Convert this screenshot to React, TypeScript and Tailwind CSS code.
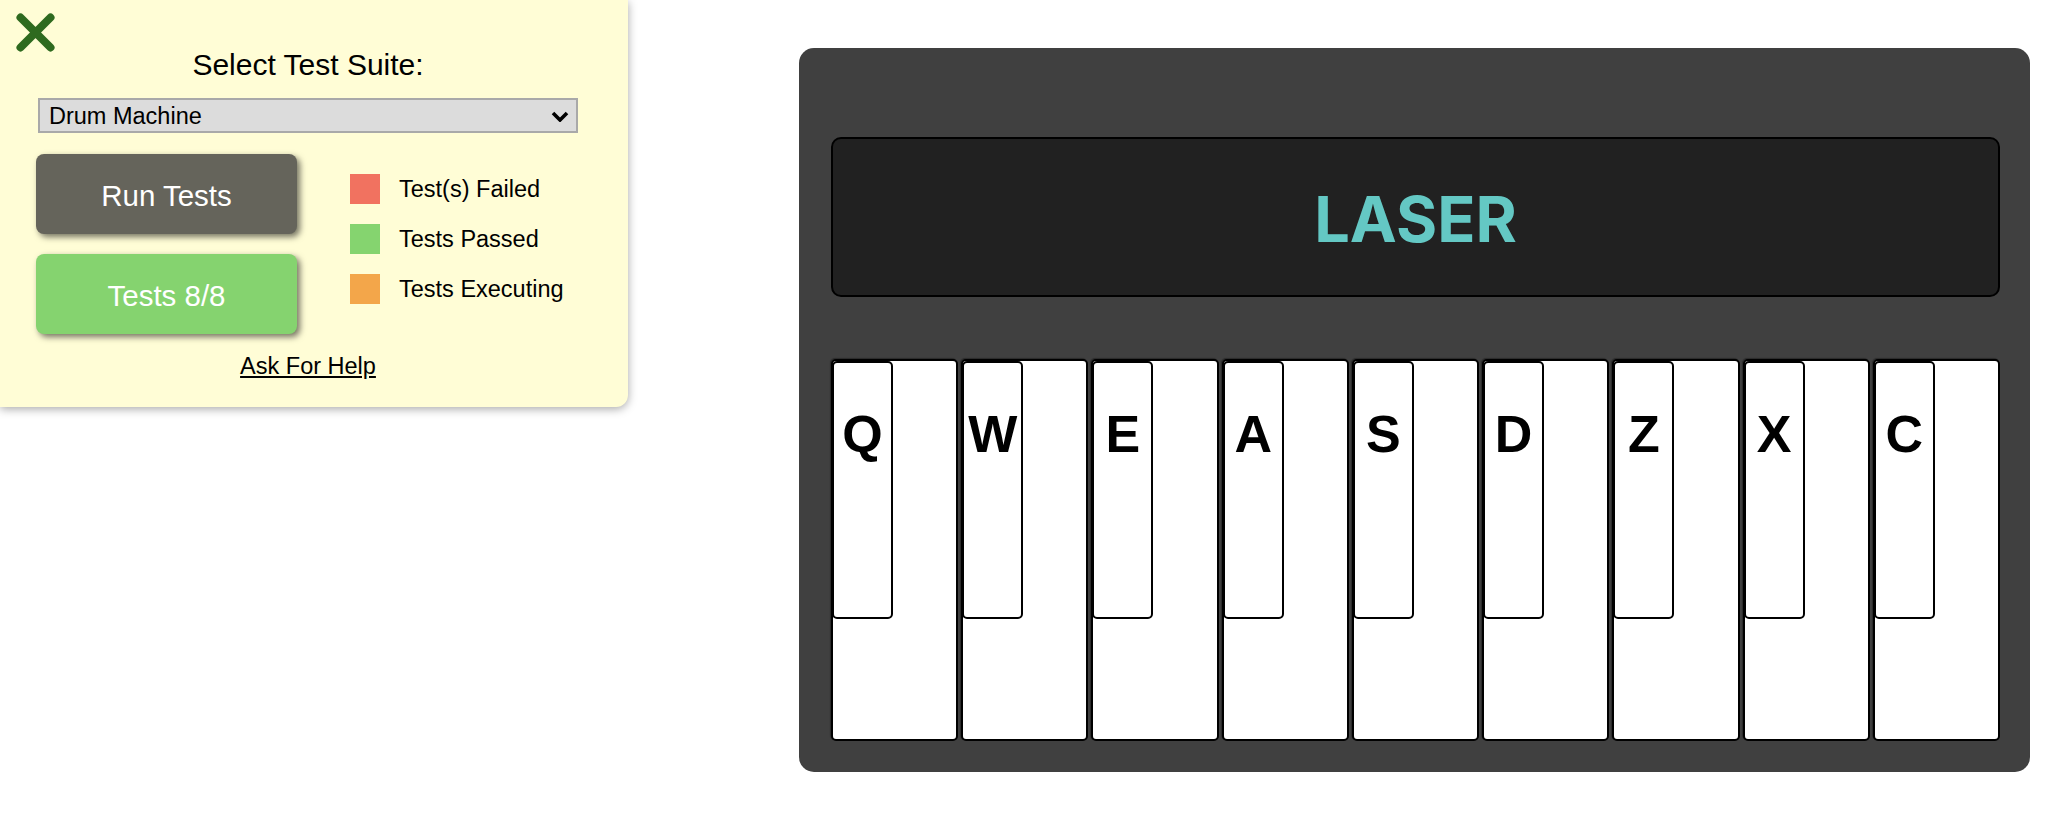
import { useState } from "react";

const KEYS = ["Q", "W", "E", "A", "S", "D", "Z", "X", "C"];

const LEGEND = [
    { label: "Test(s) Failed", color: "bg-[#f17260]" },
    { label: "Tests Passed", color: "bg-[#85d46f]" },
    { label: "Tests Executing", color: "bg-[#f3a64a]" },
];

const TestPanel = () => {
    const [suite, setSuite] = useState("drum-machine");

    return (
        <div className="absolute top-0 left-0 w-[628px] h-[407px] rounded-br-[12px] bg-[#fffdd6] shadow-[0_2px_10px_rgba(0,0,0,0.35)] font-['Liberation_Sans',Arial,sans-serif] text-black">
            <button className="absolute left-[16px] top-[13px] w-[39px] h-[39px]" aria-label="Close">
                <svg viewBox="0 0 39 39" className="w-full h-full">
                    <path d="M4.5 4.5 L34.5 34.5 M34.5 4.5 L4.5 34.5" stroke="#2e6a1f" strokeWidth="8" strokeLinecap="round" fill="none" />
                </svg>
            </button>

            <div className="flex flex-col pl-[38px] pr-[50px] pt-[48px]">
                <div className="text-center text-[30px] leading-[33px]">Select Test Suite:</div>

                <div className="relative mt-[17px] h-[35px]">
                    <select
                        value={suite}
                        onChange={(e) => setSuite(e.target.value)}
                        className="appearance-none w-full h-full bg-[#dcdcdc] border-2 border-[#a9a9a9] pl-[9px] pt-[2px] text-[23.5px] leading-none text-black outline-none"
                    >
                        <option value="drum-machine">Drum Machine</option>
                        <option value="calculator">JavaScript Calculator</option>
                        <option value="pomodoro">25 + 5 Clock</option>
                    </select>
                    <svg viewBox="0 0 18 11" className="pointer-events-none absolute right-[9px] top-[13px] w-[18px] h-[11px]">
                        <path d="M2 2 L9 9 L16 2" stroke="#000" strokeWidth="3.6" fill="none" />
                    </svg>
                </div>

                <div className="flex mt-[21px] -ml-[2px]">
                    <div className="flex flex-col gap-[20px] w-[261px]">
                        <button className="h-[80px] pt-[5px] rounded-[8px] bg-[#65645b] text-white text-[29.5px] shadow-[3px_3px_6px_rgba(0,0,0,0.55)]">
                            Run Tests
                        </button>
                        <button className="h-[80px] pt-[5px] rounded-[8px] bg-[#85d36f] text-white text-[29.5px] shadow-[3px_3px_6px_rgba(0,0,0,0.55)]">
                            Tests 8/8
                        </button>
                    </div>

                    <div className="flex flex-col gap-[20px] ml-[53px] mt-[20px]">
                        {LEGEND.map((item) => (
                            <div key={item.label} className="flex items-center gap-[19px]">
                                <div className={`w-[30px] h-[30px] ${item.color}`}></div>
                                <span className="text-[23.5px] leading-[26px] -mt-[1px]">{item.label}</span>
                            </div>
                        ))}
                    </div>
                </div>

                <a href="#" className="self-center mt-[19px] text-[23.5px] leading-[26px] underline text-black">
                    Ask For Help
                </a>
            </div>
        </div>
    );
};

const DrumPad = ({ letter }: { letter: string }) => {
    return (
        <div className="relative flex-1 h-full bg-white border-2 border-black rounded-[5px] shadow-[-1px_-1px_1px_rgba(0,0,0,0.35)]">
            <div className="absolute top-0 left-[-1px] w-[61px] h-[258px] bg-white border-2 border-black rounded-[5px] flex justify-center pt-[45px]">
                <span className="text-[52px] leading-none font-bold font-['Liberation_Sans',Arial,sans-serif] text-black">
                    {letter}
                </span>
            </div>
        </div>
    );
};

const App = () => {
    return (
        <div className="relative w-full min-h-[832px] bg-white flex justify-end pt-[48px] pr-[22px]">
            <TestPanel />

            <div className="w-[1231px] h-[724px] rounded-[15px] bg-[#404040] flex flex-col pl-[32px] pr-[30px] pt-[89px] pb-[31px]">
                <div className="h-[160px] rounded-[10px] bg-[#212121] border-2 border-black flex items-center justify-center pt-[5px]">
                    <span className="text-[63px] leading-none font-bold text-[#64c8c4] font-['Inter','Liberation_Sans',sans-serif]">
                        LASER
                    </span>
                </div>

                <div className="flex gap-[3px] mt-[62px] flex-1">
                    {KEYS.map((k) => (
                        <DrumPad key={k} letter={k} />
                    ))}
                </div>
            </div>
        </div>
    );
};

export default App;
